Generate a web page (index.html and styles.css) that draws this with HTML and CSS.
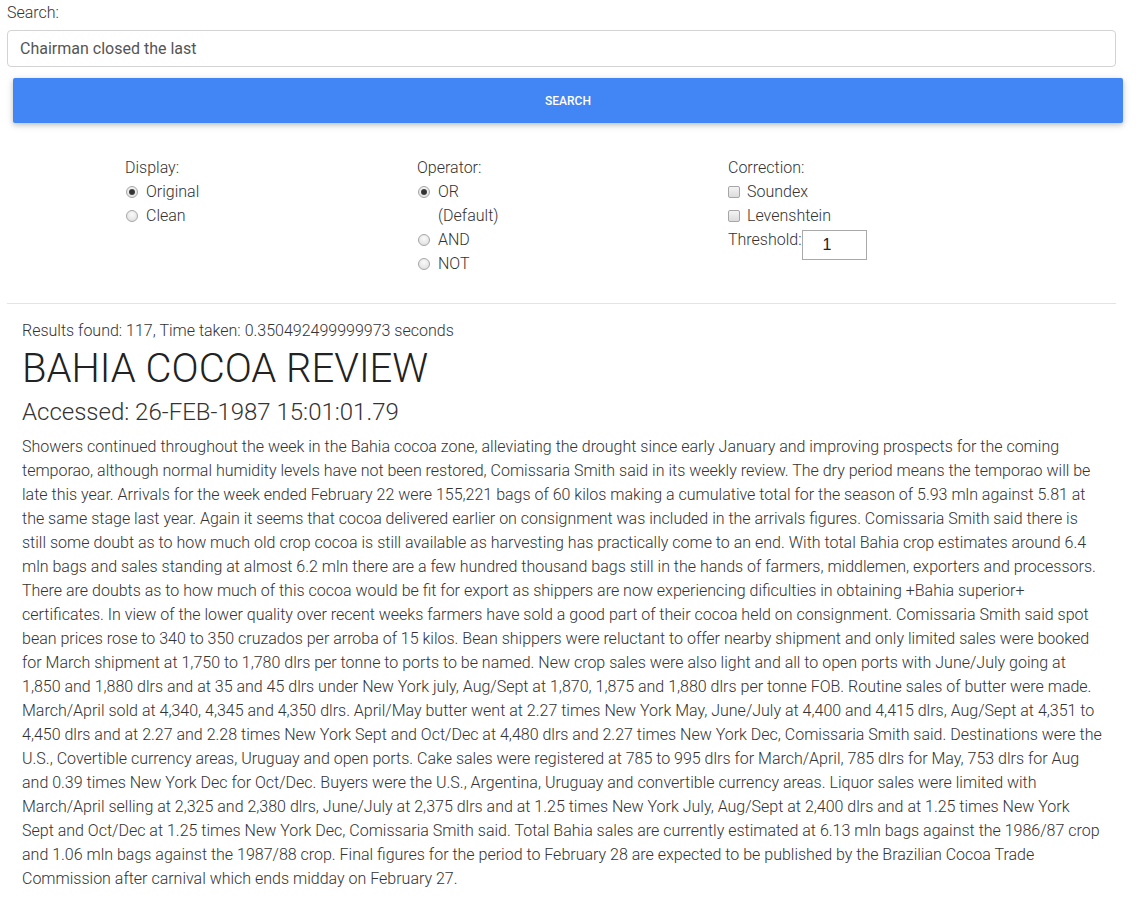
FILE: index.html
```html
<!DOCTYPE html>
<html>
<head>
<meta charset="utf-8">
<link rel="stylesheet" href="styles.css">
</head>
<body>
<div class="page">
  <form class="search-form">
    <label class="search-label">Search:</label>
    <input class="search-input" type="text" value="Chairman closed the last">
    <button class="search-btn" type="button">SEARCH</button>

    <div class="options">
      <div class="opt-col col-display">
        <div class="opt-title">Display:</div>
        <label class="opt"><span class="radio checked"></span><span>Original</span></label>
        <label class="opt"><span class="radio"></span><span>Clean</span></label>
      </div>
      <div class="opt-col col-operator">
        <div class="opt-title">Operator:</div>
        <label class="opt"><span class="radio checked"></span><span class="narrow">OR (Default)</span></label>
        <label class="opt"><span class="radio"></span><span>AND</span></label>
        <label class="opt"><span class="radio"></span><span>NOT</span></label>
      </div>
      <div class="opt-col col-correction">
        <div class="opt-title">Correction:</div>
        <label class="opt"><span class="check"></span><span>Soundex</span></label>
        <label class="opt"><span class="check"></span><span>Levenshtein</span></label>
        <div class="threshold"><span>Threshold:</span><input class="thr-input" type="text" value="1"></div>
      </div>
    </div>
  </form>

  <hr class="divider">

  <div class="results">
    <div class="stats">Results found: 117, Time taken: 0.350492499999973 seconds</div>
    <h1 class="doc-title">BAHIA COCOA REVIEW</h1>
    <h3 class="doc-date">Accessed: 26-FEB-1987 15:01:01.79</h3>
    <p class="doc-body">Showers continued throughout the week in the Bahia cocoa zone, alleviating the drought since early January and improving prospects for the coming temporao, although normal humidity levels have not been restored, Comissaria Smith said in its weekly review. The dry period means the temporao will be late this year. Arrivals for the week ended February 22 were 155,221 bags of 60 kilos making a cumulative total for the season of 5.93 mln against 5.81 at the same stage last year. Again it seems that cocoa delivered earlier on consignment was included in the arrivals figures. Comissaria Smith said there is still some doubt as to how much old crop cocoa is still available as harvesting has practically come to an end. With total Bahia crop estimates around 6.4 mln bags and sales standing at almost 6.2 mln there are a few hundred thousand bags still in the hands of farmers, middlemen, exporters and processors. There are doubts as to how much of this cocoa would be fit for export as shippers are now experiencing dificulties in obtaining +Bahia superior+ certificates. In view of the lower quality over recent weeks farmers have sold a good part of their cocoa held on consignment. Comissaria Smith said spot bean prices rose to 340 to 350 cruzados per arroba of 15 kilos. Bean shippers were reluctant to offer nearby shipment and only limited sales were booked for March shipment at 1,750 to 1,780 dlrs per tonne to ports to be named. New crop sales were also light and all to open ports with June/July going at 1,850 and 1,880 dlrs and at 35 and 45 dlrs under New York july, Aug/Sept at 1,870, 1,875 and 1,880 dlrs per tonne FOB. Routine sales of butter were made. March/April sold at 4,340, 4,345 and 4,350 dlrs. April/May butter went at 2.27 times New York May, June/July at 4,400 and 4,415 dlrs, Aug/Sept at 4,351 to 4,450 dlrs and at 2.27 and 2.28 times New York Sept and Oct/Dec at 4,480 dlrs and 2.27 times New York Dec, Comissaria Smith said. Destinations were the U.S., Covertible currency areas, Uruguay and open ports. Cake sales were registered at 785 to 995 dlrs for March/April, 785 dlrs for May, 753 dlrs for Aug and 0.39 times New York Dec for Oct/Dec. Buyers were the U.S., Argentina, Uruguay and convertible currency areas. Liquor sales were limited with March/April selling at 2,325 and 2,380 dlrs, June/July at 2,375 dlrs and at 1.25 times New York July, Aug/Sept at 2,400 dlrs and at 1.25 times New York Sept and Oct/Dec at 1.25 times New York Dec, Comissaria Smith said. Total Bahia sales are currently estimated at 6.13 mln bags against the 1986/87 crop and 1.06 mln bags against the 1987/88 crop. Final figures for the period to February 28 are expected to be published by the Brazilian Cocoa Trade Commission after carnival which ends midday on February 27.</p>
  </div>
</div>
</body>
</html>
```

FILE: styles.css
```css
* { box-sizing: border-box; }
html, body { margin: 0; padding: 0; background: #fff; }
body {
  font-family: Roboto, "Noto Sans", sans-serif;
  font-weight: 300;
  color: #333;
  font-size: 16px;
  line-height: 24px;
}
.page {
  margin-left: 7px;
  width: 1109px;
  padding-top: 3px;
}
.search-form { display: flex; flex-direction: column; }
.search-label {
  display: block;
  font-size: 16px;
  line-height: 20px;
  color: #333;
  margin-bottom: 7px;
}
.search-input {
  display: block;
  width: 1109px;
  height: 37px;
  border: 1px solid #d3d3d3;
  border-radius: 4px;
  padding: 0 12px;
  font-family: Roboto, "Noto Sans", sans-serif;
  font-weight: 400;
  font-size: 16px;
  color: #555;
  outline: none;
}
.search-btn {
  display: block;
  margin-top: 11px;
  margin-left: 6px;
  width: 1110px;
  height: 45px;
  border: none;
  border-radius: 2px;
  background: #4285f4;
  color: #fff;
  font-family: Roboto, "Noto Sans", sans-serif;
  font-weight: 500;
  font-size: 12px;
  letter-spacing: 0;
  box-shadow: 0 2px 5px rgba(0,0,0,0.18), 0 2px 10px rgba(0,0,0,0.10);
}
.options {
  display: grid;
  grid-template-columns: 292px 311px 1fr;
  padding-left: 118px;
  margin-top: 33px;
}
.opt-col { display: flex; flex-direction: column; }
.opt-title { line-height: 24px; }
.opt {
  display: flex;
  align-items: flex-start;
  line-height: 24px;
}
.radio {
  flex: none;
  width: 12px;
  height: 12px;
  margin: 6px 8px 0 1px;
  border-radius: 50%;
  border: 1px solid #a6a6a6;
  background: radial-gradient(circle at 50% 35%, #fafafa 0%, #e4e4e4 70%, #d6d6d6 100%);
  position: relative;
}
.radio.checked::after {
  content: "";
  position: absolute;
  left: 2px; top: 2px;
  width: 6px; height: 6px;
  border-radius: 50%;
  background: radial-gradient(circle, #333 40%, #555 100%);
}
.check {
  flex: none;
  width: 12px;
  height: 12px;
  margin: 6px 7px 0 0;
  border: 1px solid #a6a6a6;
  border-radius: 2px;
  background: linear-gradient(#f4f4f4, #dcdcdc);
}
.narrow { width: 62px; }
.threshold {
  display: flex;
  align-items: flex-start;
  line-height: 24px;
}
.thr-input {
  width: 65px;
  height: 30px;
  margin-top: 2px;
  border: 1px solid #a9a9a9;
  padding: 0 0 0 20px;
  font-family: "Liberation Sans", Arial, sans-serif;
  font-size: 16px;
  color: #222;
  outline: none;
  border-radius: 0;
}
.divider {
  border: none;
  border-top: 1px solid #e3e3e3;
  margin: 27px 0 0 0;
  height: 0;
}
.results {
  padding: 0 13px 0 15px;
}
.stats {
  margin-top: 17px;
  font-size: 16px;
  line-height: 20px;
  color: #333;
}
.doc-title {
  margin: 5px 0 0 0;
  font-size: 40px;
  font-weight: 300;
  line-height: 46px;
  color: #222;
}
.doc-date {
  margin: 5px 0 0 0;
  font-size: 24px;
  font-weight: 300;
  line-height: 30px;
  color: #333;
}
.doc-body {
  margin: 8px 0 0 0;
  font-size: 16px;
  line-height: 24px;
  color: #333;
}
```
